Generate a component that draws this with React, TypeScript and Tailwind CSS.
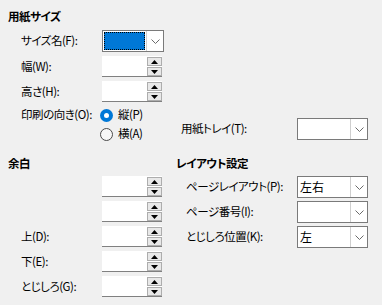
import React from 'react';

const font = "[font-family:'Noto_Sans_CJK_JP','Noto_Sans',sans-serif] [font-feature-settings:'palt']";

const Chevron = () => (
  <svg width="9" height="5" viewBox="0 0 9 5" fill="none">
    <path d="M0.5 0.5L4.5 4.5L8.5 0.5" stroke="#6a6a6a" strokeWidth="1" />
  </svg>
);

const Combo: React.FC<{ width: string; value?: string; focused?: boolean }> = ({ width, value, focused }) => (
  <div className={`flex h-[22px] border border-[#7a7a7a] bg-white ${width}`}>
    {focused ? (
      <div className="m-[1px] flex-1 border border-dotted border-black bg-[#0078d7]" />
    ) : (
      <div className="flex flex-1 items-center pl-[2px] text-[12px] leading-none tracking-normal text-black">{value}</div>
    )}
    <div className="flex w-[17px] items-center justify-center border-l border-[#cfcfcf] bg-white">
      <Chevron />
    </div>
  </div>
);

const Arrow: React.FC<{ up?: boolean }> = ({ up }) => (
  <svg width="7" height="4" viewBox="0 0 7 4">
    <path d={up ? 'M0 4L3.5 0L7 4Z' : 'M0 0L3.5 4L7 0Z'} fill="#000" />
  </svg>
);

const Spinner = () => (
  <div className="flex h-[21px] w-[60px] border-b border-[#808080] bg-white">
    <div className="flex-1" />
    <div className="flex flex-col gap-[1px] pt-[1px]">
      <div className="flex h-[9px] w-[15px] items-center justify-center border border-[#adadad] bg-[#e8e8e8]">
        <Arrow up />
      </div>
      <div className="flex h-[9px] w-[15px] items-center justify-center border border-[#adadad] bg-[#e8e8e8]">
        <Arrow />
      </div>
    </div>
  </div>
);

const Radio: React.FC<{ checked?: boolean; label: string }> = ({ checked, label }) => (
  <div className="flex h-[18px] items-center gap-[5px]">
    {checked ? (
      <div className="flex h-[13px] w-[13px] items-center justify-center rounded-full bg-[#0078d7]">
        <div className="h-[5px] w-[5px] rounded-full bg-white" />
      </div>
    ) : (
      <div className="h-[13px] w-[13px] rounded-full border border-[#4a4a4a] bg-[#f7f7f7]" />
    )}
    <span>{label}</span>
  </div>
);

const Label: React.FC<{ text?: string; w?: string; pl?: string }> = ({ text, w = 'w-[102px]', pl = 'pl-[21px]' }) => (
  <div className={`flex items-center ${w} ${pl}`}>{text}</div>
);

export default function App() {
  return (
    <div className={`h-[305px] w-[382px] overflow-hidden bg-[#f0f0f0] text-[11.5px] leading-none tracking-[-0.04em] text-black ${font}`}>
      {/* 用紙サイズ */}
      <div className="pt-[8px]">
        <div className="flex h-[18px] items-center pl-[8px] font-bold">用紙サイズ</div>
        <div className="mt-[4px] flex h-[22px]">
          <Label text="サイズ名(F):" />
          <Combo width="w-[62px]" focused />
        </div>
        <div className="mt-[4px] flex h-[21px]">
          <Label text="幅(W):" />
          <Spinner />
        </div>
        <div className="mt-[4px] flex h-[21px]">
          <Label text="高さ(H):" />
          <Spinner />
        </div>
        <div className="mt-[4px] flex">
          <div className="flex h-[18px] w-[100px] items-center pl-[21px]">印刷の向き(O):</div>
          <div className="flex w-[81px] flex-col gap-[1px]">
            <Radio checked label="縦(P)" />
            <Radio label="横(A)" />
          </div>
          <div className="mt-[12px] flex h-[22px]">
            <div className="flex w-[116px] items-center">用紙トレイ(T):</div>
            <Combo width="w-[71px]" />
          </div>
        </div>
      </div>

      <div className="mt-[12px] flex">
        {/* 余白 */}
        <div className="w-[176px]">
          <div className="flex h-[18px] items-center pl-[8px] font-bold">余白</div>
          <div className="mt-[3px] flex flex-col gap-[4px]">
            {['', '', '上(D):', '下(E):', 'とじしろ(G):'].map((t, i) => (
              <div key={i} className="flex h-[21px]">
                <Label text={t} />
                <Spinner />
              </div>
            ))}
          </div>
        </div>

        {/* レイアウト設定 */}
        <div className="flex-1">
          <div className="flex h-[18px] items-center font-bold">レイアウト設定</div>
          <div className="mt-[3px] flex flex-col gap-[3px]">
            {[
              ['ページレイアウト(P):', '左右'],
              ['ページ番号(I):', ''],
              ['とじしろ位置(K):', '左'],
            ].map(([l, v]) => (
              <div key={l} className="flex h-[22px]">
                <Label text={l} w="w-[121px]" pl="pl-[10px]" />
                <Combo width="w-[71px]" value={v} />
              </div>
            ))}
          </div>
        </div>
      </div>
    </div>
  );
}
